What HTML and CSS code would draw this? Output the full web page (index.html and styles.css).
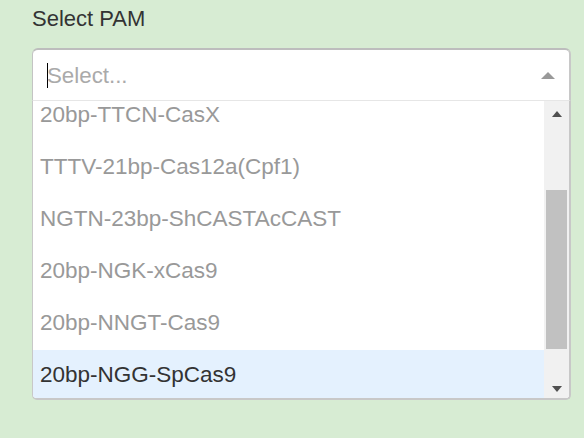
FILE: index.html
```html
<!DOCTYPE html>
<html>
<head>
<meta charset="utf-8">
<link rel="stylesheet" href="styles.css">
</head>
<body>
<div class="page">
  <div class="label">Select PAM</div>
  <div class="select">
    <div class="control">
      <span class="caret"></span>
      <span class="placeholder">Select...</span>
      <span class="arrow"></span>
    </div>
    <div class="menu">
      <div class="options">
        <div class="option-list">
          <div class="option">20bp-TTCN-CasX</div>
          <div class="option">TTTV-21bp-Cas12a(Cpf1)</div>
          <div class="option">NGTN-23bp-ShCASTAcCAST</div>
          <div class="option">20bp-NGK-xCas9</div>
          <div class="option">20bp-NNGT-Cas9</div>
          <div class="option selected">20bp-NGG-SpCas9</div>
        </div>
      </div>
      <div class="scrollbar">
        <div class="sb-btn"><span class="sb-up"></span></div>
        <div class="sb-track"><div class="sb-thumb"></div></div>
        <div class="sb-btn sb-btn-down"><span class="sb-down"></span></div>
      </div>
    </div>
  </div>
</div>
</body>
</html>
```

FILE: styles.css
```css
html, body {
  margin: 0;
  padding: 0;
  background: #d7ecd3;
  font-family: "Liberation Sans", Arial, sans-serif;
  font-size: 22px;
}
.page {
  padding: 6px 13px 0 32px;
}
.label {
  color: #333;
  line-height: 25px;
  margin-bottom: 17px;
}
.select {
  width: 539px;
}
.control {
  box-sizing: border-box;
  height: 52px;
  background: #fff;
  border-top: 2px solid #bdbdbd;
  border-left: 1px solid #c4c4c4;
  border-right: 2px solid #c8c8c8;
  border-radius: 6px 6px 0 0;
  display: flex;
  align-items: center;
  padding: 0 14px 0 14px;
}
.caret {
  width: 1px;
  height: 25px;
  background: #000;
}
.placeholder {
  color: #aaa;
  line-height: 25px;
  margin-left: -1px;
  font-size: 22.3px;
}
.arrow {
  margin-left: auto;
  width: 0;
  height: 0;
  border-style: solid;
  border-width: 0 7.5px 7px 7.5px;
  border-color: transparent transparent #999 transparent;
}
.menu {
  box-sizing: border-box;
  height: 300px;
  background: #fff;
  border-top: 1px solid #e6e6e6;
  border-left: 1px solid #c8c8c8;
  border-right: 2px solid #c8c8c8;
  border-bottom: 2px solid #c8c8c8;
  border-radius: 0 0 5px 5px;
  display: flex;
  overflow: hidden;
}
.options {
  flex: 1;
  overflow: hidden;
}
.option-list {
  margin-top: -11px;
}
.option {
  height: 52px;
  box-sizing: border-box;
  padding: 12px 7px 15px 7px;
  line-height: 25px;
  font-size: 22.5px;
  color: #999;
  white-space: nowrap;
}
.option.selected {
  background: #e4f1fe;
  color: #333;
}
.scrollbar {
  width: 25px;
  background: #f1f1f1;
  display: flex;
  flex-direction: column;
}
.sb-btn {
  height: 25px;
  display: flex;
  align-items: center;
  justify-content: center;
  flex-shrink: 0;
}
.sb-btn-down {
  align-items: flex-end;
  padding-bottom: 6px;
  box-sizing: border-box;
}
.sb-up {
  width: 0;
  height: 0;
  border-style: solid;
  border-width: 0 5.5px 6px 5.5px;
  border-color: transparent transparent #505050 transparent;
}
.sb-down {
  width: 0;
  height: 0;
  border-style: solid;
  border-width: 6px 5.5px 0 5.5px;
  border-color: #505050 transparent transparent transparent;
}
.sb-track {
  flex: 1;
  padding: 64px 2px 0 2px;
}
.sb-thumb {
  height: 159px;
  background: #c1c1c1;
}
```
